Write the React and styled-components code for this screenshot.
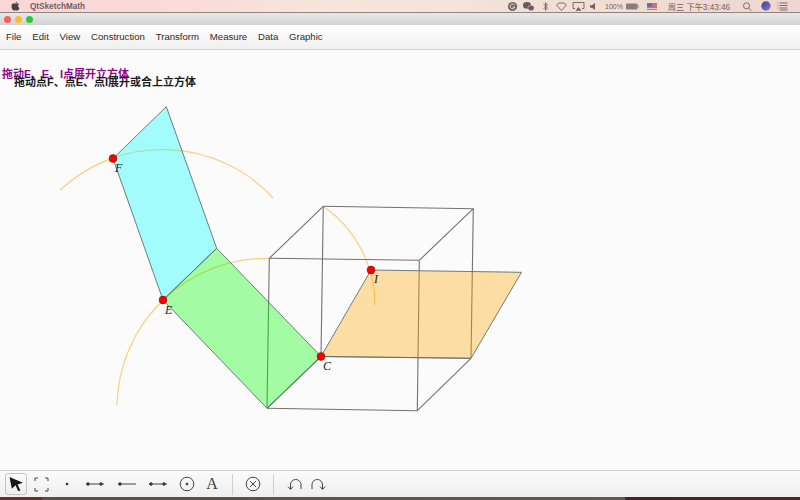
import React from 'react';
import styled, { createGlobalStyle } from 'styled-components';

const SANS = '"Liberation Sans", "Noto Sans CJK SC", sans-serif';

const GlobalStyle = createGlobalStyle`
  html, body { margin: 0; padding: 0; background: #fbfbfb; }
  #root { width: 800px; height: 500px; }
`;

const Page = styled.div`
  width: 800px;
  height: 500px;
  display: flex;
  flex-direction: column;
  overflow: hidden;
  font-family: ${SANS};
`;

const SystemBar = styled.div`
  height: 13px;
  flex-shrink: 0;
  display: flex;
  align-items: center;
  justify-content: space-between;
  background: linear-gradient(90deg, #fbd6d6 0%, #f9dcd8 25%, #f6e6da 42%, #f2e2d8 60%, #efd6d0 100%);
  border-bottom: 1px solid #8f8680;
  box-sizing: border-box;
  color: #5c4a4c;
`;

const SystemLeft = styled.div`
  display: flex;
  align-items: center;
  padding-left: 11px;
  gap: 10px;
`;

const AppName = styled.span`
  font-size: 8.2px;
  font-weight: 700;
  opacity: 0.85;
`;

const SystemRight = styled.div`
  display: flex;
  align-items: center;
  width: 295px;
  flex-shrink: 0;
`;

const StatusSlot = styled.div`
  width: ${p => p.$w}px;
  display: flex;
  justify-content: center;
  align-items: center;
  flex-shrink: 0;
  font-size: ${p => p.$size || 7.5}px;
  white-space: nowrap;
  opacity: 0.85;
`;

const TitleBar = styled.div`
  height: 12px;
  flex-shrink: 0;
  display: flex;
  align-items: center;
  gap: 4px;
  padding-left: 4px;
  background: linear-gradient(#e8e8e8, #d3d3d3);
`;

const TrafficLight = styled.span`
  width: 7px;
  height: 7px;
  border-radius: 50%;
  background: ${p => p.$color};
`;

const MenuRow = styled.nav`
  height: 25px;
  flex-shrink: 0;
  box-sizing: border-box;
  display: flex;
  align-items: center;
  gap: 10.8px;
  padding: 0 0 1px 6px;
  background: linear-gradient(#ffffff, #f0f0f0);
  border-bottom: 1px solid #d2d2d2;
`;

const MenuItem = styled.span`
  font-size: 9.6px;
  color: #2c2c2c;
`;

const Canvas = styled.main`
  flex: 1;
  position: relative;
  background: #fbfbfb;
`;

const Drawing = styled.svg`
  display: block;
  width: 800px;
  height: 420px;
`;

const Caption = styled.div`
  position: absolute;
  left: ${p => p.$x}px;
  top: ${p => p.$y}px;
  font-size: 11px;
  line-height: 13px;
  font-weight: 700;
  color: ${p => p.$color};
  white-space: nowrap;
`;

const PointLabel = styled.text`
  font-family: "Liberation Serif", serif;
  font-style: italic;
  font-size: 12px;
  fill: #222;
`;

const Toolbar = styled.div`
  height: 27px;
  flex-shrink: 0;
  box-sizing: border-box;
  display: flex;
  align-items: center;
  padding-left: 5px;
  background: linear-gradient(#fbfbfb, #efefef);
  border-top: 1px solid #cccccc;
`;

const ToolButton = styled.div`
  width: ${p => p.$w}px;
  height: 22px;
  box-sizing: border-box;
  flex-shrink: 0;
  display: flex;
  align-items: center;
  justify-content: center;
  border-radius: 3px;
  color: #444;
  ${p => p.$active && `
    border: 1px solid #c4c4c4;
    background: linear-gradient(#fafafa, #efefef);
  `}
`;

const ToolLetter = styled.span`
  font-family: "Liberation Serif", serif;
  font-size: 16px;
  color: #3c3c3c;
`;

const ToolDivider = styled.div`
  width: 1px;
  height: 21px;
  flex-shrink: 0;
  margin: 0 ${p => p.$right || 0}px 0 ${p => p.$left || 0}px;
  background: #cfcfcf;
`;

const DesktopStrip = styled.div`
  height: 3px;
  flex-shrink: 0;
  background: linear-gradient(90deg, #6a2a30 0, #6a2a30 42px, #55504e 42px, #5e5a58 625px, #4a1e2a 625px, #54242c 100%);
`;

const cube = [
  [269.3, 258.3, 419.3, 260.3], [419.3, 260.3, 417.3, 410.7], [417.3, 410.7, 267, 408.3], [267, 408.3, 269.3, 258.3],
  [323.3, 206.3, 473.3, 208.7], [473.3, 208.7, 471, 358.3], [471, 358.3, 321, 356.5], [321, 356.5, 323.3, 206.3],
  [269.3, 258.3, 323.3, 206.3], [419.3, 260.3, 473.3, 208.7], [417.3, 410.7, 471, 358.3], [267, 408.3, 321, 356.5],
];

const faces = [
  { points: '113,158.5 166.3,106.7 216.7,248.3 163,300', fill: 'rgba(0,255,255,0.35)' },
  { points: '163,300 216.7,248.3 321,356.5 267,408.3', fill: 'rgba(0,255,0,0.35)' },
  { points: '321,356.5 371,270 521.5,272.3 471,358.3', fill: 'rgba(255,165,0,0.35)' },
];

const arcs = ['M60 190 A150 150 0 0 1 273 198', 'M117 405 A150 150 0 0 1 269.3 258.3', 'M323.3 206.3 A120 120 0 0 1 375 305'];

const points = [
  { x: 113, y: 158.5, name: 'F', lx: 115, ly: 172 },
  { x: 163, y: 300, name: 'E', lx: 165, ly: 314 },
  { x: 321, y: 356.5, name: 'C', lx: 323, ly: 370 },
  { x: 371, y: 270, name: 'I', lx: 374, ly: 283 },
];

const menus = ['File', 'Edit', 'View', 'Construction', 'Transform', 'Measure', 'Data', 'Graphic'];

const Icon = ({ w = 20, h = 20, children }) => (
  <svg width={w} height={h} viewBox={`0 0 ${w} ${h}`} fill="none" stroke="#444" strokeWidth="1">{children}</svg>
);

const SegmentIcon = ({ left, right }) => (
  <Icon w={20} h={8}>
    <line x1="1" y1="4" x2="19" y2="4" />
    {left && <circle cx={3} cy="4" r="1.3" fill="#333" />}
    {right && <circle cx={16} cy="4" r="1.3" fill="#333" />}
  </Icon>
);

const AppleLogo = () => (
  <svg width="9" height="10" viewBox="0 0 9 10">
    <path d="M6 0.4C5.2 0.6 4.7 1.2 4.6 2.1 5.4 2.1 6 1.3 6 0.4ZM4.5 2.6C3.9 2.6 3.4 2.3 2.8 2.3 1.6 2.4 0.5 3.4 0.5 5.2 0.5 7.2 1.8 9.6 3 9.6 3.6 9.6 3.9 9.2 4.6 9.2 5.3 9.2 5.5 9.6 6.2 9.6 7.2 9.6 8.1 8 8.5 6.9 7.5 6.4 7.1 5.6 7.1 4.8 7.1 4 7.6 3.4 8.2 3 7.7 2.5 7 2.3 6.3 2.3 5.5 2.3 5 2.6 4.5 2.6Z" fill="#4a4244" />
  </svg>
);

const StatusIcon = ({ children }) => (
  <svg width="13" height="11" viewBox="0 0 13 11" fill="none" stroke="#5a4c4e" strokeWidth="0.9">{children}</svg>
);

const App = () => (
  <Page>
    <GlobalStyle />
    <SystemBar>
      <SystemLeft>
        <AppleLogo />
        <AppName>QtSketchMath</AppName>
      </SystemLeft>
      <SystemRight>
        <StatusSlot $w={14}>
          <StatusIcon><circle cx="6.5" cy="5.5" r="4.6" fill="#5b5054" stroke="none" /><path d="M8.5 4A2.4 2.4 0 1 0 8.8 6.2H6.8" stroke="#efe0dc" strokeWidth="1" /></StatusIcon>
        </StatusSlot>
        <StatusSlot $w={18}>
          <StatusIcon><ellipse cx="5" cy="4.4" rx="4" ry="3.3" fill="#4e4448" stroke="none" /><ellipse cx="9" cy="7" rx="3.2" ry="2.7" fill="#4e4448" stroke="#efdcd6" strokeWidth="0.5" /></StatusIcon>
        </StatusSlot>
        <StatusSlot $w={16}>
          <StatusIcon><path d="M4.5 3L8.5 7L6.5 9.4V1.6L8.5 4L4.5 8" /></StatusIcon>
        </StatusSlot>
        <StatusSlot $w={17}>
          <StatusIcon><path d="M1.5 4L4 2H9L11.5 4L6.5 9.5Z" /></StatusIcon>
        </StatusSlot>
        <StatusSlot $w={16}>
          <StatusIcon><path d="M3 7.5H1V1.5H12V7.5H10" /><path d="M6.5 6L9.5 9.8H3.5Z" fill="#5a4c4e" stroke="none" /></StatusIcon>
        </StatusSlot>
        <StatusSlot $w={16}>
          <StatusIcon><path d="M2 4.2H4L7 2V9L4 6.8H2Z" fill="#5a4c4e" stroke="none" /></StatusIcon>
        </StatusSlot>
        <StatusSlot $w={24} $size={7}>100%</StatusSlot>
        <StatusSlot $w={13}>
          <svg width="13" height="7" viewBox="0 0 13 7"><rect x="0" y="0.5" width="11.5" height="6" rx="1" fill="#7a6c6c" /><rect x="11.7" y="2.3" width="1" height="2.4" fill="#7a6c6c" /></svg>
        </StatusSlot>
        <StatusSlot $w={26}>
          <svg width="10" height="7" viewBox="0 0 10 7"><rect width="10" height="7" fill="#c9606a" /><rect width="5" height="4" fill="#4c5f9a" /><rect y="5.2" width="10" height="0.8" fill="#f1d8d8" /></svg>
        </StatusSlot>
        <StatusSlot $w={68} $size={8.2}>周三 下午3:43:46</StatusSlot>
        <StatusSlot $w={28}>
          <StatusIcon><circle cx="5.5" cy="4.8" r="3" /><line x1="7.7" y1="7" x2="10.5" y2="9.8" /></StatusIcon>
        </StatusSlot>
        <StatusSlot $w={10}>
          <svg width="10" height="10" viewBox="0 0 10 10"><defs><linearGradient id="siri" x1="0" y1="0" x2="1" y2="1"><stop offset="0" stopColor="#2c2a5c" /><stop offset="0.55" stopColor="#3f4fb8" /><stop offset="1" stopColor="#c25fb0" /></linearGradient></defs><circle cx="5" cy="5" r="4.7" fill="url(#siri)" /></svg>
        </StatusSlot>
        <StatusSlot $w={22}>
          <StatusIcon><path d="M3.5 2H11.5M3.5 4.5H11.5M3.5 7H11.5M3.5 9H11.5M1.5 2H2.3M1.5 4.5H2.3M1.5 7H2.3" /></StatusIcon>
        </StatusSlot>
      </SystemRight>
    </SystemBar>
    <TitleBar>
      <TrafficLight $color="#fb5f57" />
      <TrafficLight $color="#fdbb2e" />
      <TrafficLight $color="#2ac83f" />
    </TitleBar>
    <MenuRow>
      {menus.map(m => <MenuItem key={m}>{m}</MenuItem>)}
    </MenuRow>
    <Canvas>
      <Caption $x={2} $y={18} $color="#8b0a8b">拖动F、E、I点展开立方体</Caption>
      <Caption $x={14} $y={26} $color="#1c1c1c">拖动点F、点E、点I展开或合上立方体</Caption>
      <Drawing viewBox="0 50 800 420">
        {arcs.map(d => <path key={d} d={d} fill="none" stroke="#fdcf7c" strokeWidth="1.2" />)}
        {cube.map(([x1, y1, x2, y2]) => (
          <line key={`${x1}-${y1}-${x2}`} x1={x1} y1={y1} x2={x2} y2={y2} stroke="#727272" strokeWidth="1.1" />
        ))}
        {faces.map(f => <polygon key={f.points} points={f.points} fill={f.fill} stroke="#5e7070" strokeWidth="0.9" />)}
        {points.map(p => (
          <g key={p.name}>
            <circle cx={p.x} cy={p.y} r="3.9" fill="#fa0000" stroke="#7a1010" strokeWidth="0.6" />
            <PointLabel x={p.lx} y={p.ly}>{p.name}</PointLabel>
          </g>
        ))}
      </Drawing>
    </Canvas>
    <Toolbar>
      <ToolButton $w={22} $active>
        <svg width="16" height="16" viewBox="0 0 16 16"><path d="M1.5 1L15 6.8L9.6 8.4L12.4 14.4L10.2 15.2L7.6 9.2L3.8 12.8Z" fill="#1a1a1a" /></svg>
      </ToolButton>
      <ToolButton $w={28}>
        <Icon w={15} h={15}>
          <path d="M1 4V1H4M11 1H14V4M14 11V14H11M4 14H1V11" />
        </Icon>
      </ToolButton>
      <ToolButton $w={24}>
        <svg width="4" height="4" viewBox="0 0 4 4"><circle cx="2" cy="2" r="1.3" fill="#333" /></svg>
      </ToolButton>
      <ToolButton $w={32}><SegmentIcon left right /></ToolButton>
      <ToolButton $w={32}><SegmentIcon left /></ToolButton>
      <ToolButton $w={30}><SegmentIcon left right /></ToolButton>
      <ToolButton $w={28}>
        <Icon w={16} h={16}>
          <circle cx="8" cy="8" r="6.8" />
          <circle cx="8" cy="8" r="1" fill="#444" />
        </Icon>
      </ToolButton>
      <ToolButton $w={22}><ToolLetter>A</ToolLetter></ToolButton>
      <ToolDivider $left={9} />
      <ToolButton $w={40}>
        <Icon w={16} h={16}>
          <circle cx="8" cy="8" r="6.8" />
          <path d="M5 5L11 11M11 5L5 11" />
        </Icon>
      </ToolButton>
      <ToolDivider $right={8} />
      <ToolButton $w={26}>
        <Icon w={16} h={14}>
          <path d="M3.5 12V8A5 5 0 0 1 14 7.5V12" />
          <path d="M1 9.5L3.5 12.5L6 9.5" />
        </Icon>
      </ToolButton>
      <ToolButton $w={20}>
        <Icon w={16} h={14}>
          <path d="M12.5 12V8A5 5 0 0 0 2 7.5V12" />
          <path d="M10 9.5L12.5 12.5L15 9.5" />
        </Icon>
      </ToolButton>
    </Toolbar>
    <DesktopStrip />
  </Page>
);

export default App;
